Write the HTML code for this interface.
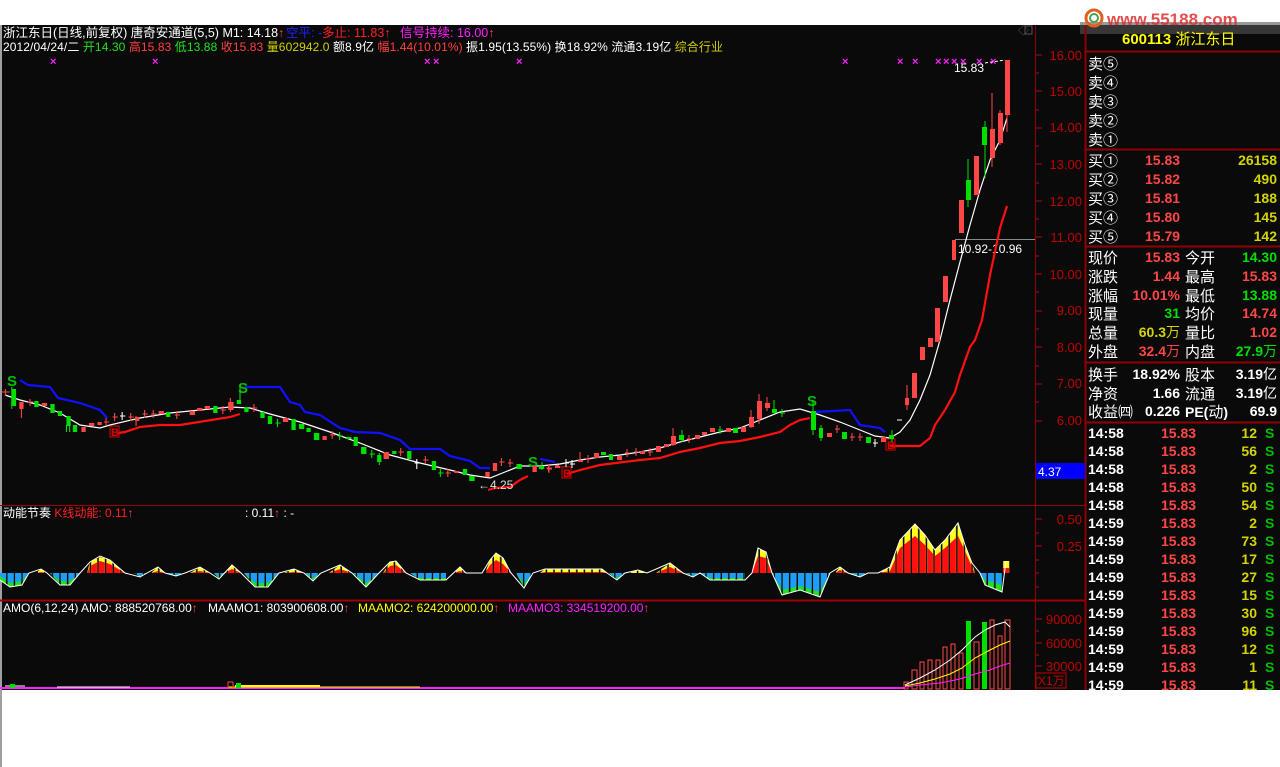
<!DOCTYPE html>
<html><head><meta charset="utf-8"><style>
html,body{margin:0;padding:0;background:#fff;}
svg{display:block;}
text{font-family:"Liberation Sans","Noto Sans CJK SC",sans-serif;}
.r{fill:#ff4646}.g{fill:#00e000}.w{fill:#fff}
.wr{stroke:#ff4646;stroke-width:1}.wg{stroke:#00e000;stroke-width:1}.ww{stroke:#fff;stroke-width:1}
.ax{fill:#c00000;font-size:13px}
.lb{fill:#fff;font-size:15px;font-family:"Noto Sans CJK SC","WenQuanYi Zen Hei",sans-serif}
.n{font-size:14px;font-weight:bold;font-family:"Liberation Sans",sans-serif}
</style></head><body>
<svg width="1280" height="767" viewBox="0 0 1280 767" xmlns="http://www.w3.org/2000/svg">
<defs>
<pattern id="pr" width="7.6" height="10" patternUnits="userSpaceOnUse"><rect width="6" height="10" fill="#ff1010"/></pattern>
<pattern id="py" width="7.6" height="10" patternUnits="userSpaceOnUse"><rect width="6" height="10" fill="#ffff20"/></pattern>
<pattern id="pb" width="7.6" height="10" patternUnits="userSpaceOnUse"><rect width="6" height="10" fill="#1e9cff"/></pattern>
<pattern id="pg" width="7.6" height="10" patternUnits="userSpaceOnUse"><rect width="6" height="10" fill="#20e020"/></pattern>
</defs>
<rect x="0" y="0" width="1280" height="25" fill="#fff"/>
<rect x="0" y="25" width="1280" height="665" fill="#0a0a0a"/>
<rect x="0" y="25" width="2" height="742" fill="#a0a0a0"/>
<!-- logo -->
<rect x="1080" y="22" width="200" height="12" fill="#555" opacity="0.6"/>
<circle cx="1094" cy="18" r="8" fill="none" stroke="#e06020" stroke-width="3"/>
<circle cx="1094" cy="18" r="4" fill="none" stroke="#50a050" stroke-width="2"/>
<text x="1107" y="25" font-size="17" font-weight="bold" fill="#e03030" opacity="0.85">www.55188.com</text>

<!-- borders -->
<line x1="1035.5" y1="25" x2="1035.5" y2="690" stroke="#900000"/>
<line x1="1085.5" y1="25" x2="1085.5" y2="690" stroke="#900000" stroke-width="2"/>
<line x1="0" y1="505.5" x2="1085" y2="505.5" stroke="#a00000"/>
<line x1="0" y1="600.5" x2="1085" y2="600.5" stroke="#a00000" stroke-width="2"/>

<!-- header text -->
<text x="3" y="37" font-size="12.5" fill="#fff">浙江东日(日线,前复权) 唐奇安通道(5,5)  M1: 14.18<tspan fill="#ff4040">↑</tspan></text>
<text x="286" y="37" font-size="12.5" fill="#2020ff">空平: -</text>
<text x="322" y="37" font-size="12.5" fill="#ff2020">多止: 11.83↑</text>
<text x="400" y="37" font-size="12.5" fill="#ff20ff">信号持续: 16.00<tspan fill="#ff4040">↑</tspan></text>
<text x="3" y="51" font-size="12" fill="#fff" textLength="720" lengthAdjust="spacing">2012/04/24/二 <tspan fill="#20e020">开14.30</tspan> <tspan fill="#ff4040">高15.83</tspan> <tspan fill="#20e020">低13.88</tspan> <tspan fill="#ff4040">收15.83</tspan> <tspan fill="#d0d000">量602942.0</tspan> 额8.9亿 <tspan fill="#ff4040">幅1.44(10.01%)</tspan> 振1.95(13.55%) 换18.92% 流通3.19亿 <tspan fill="#d0d000">综合行业</tspan></text>
<g fill="#ff20ff" font-size="11" font-weight="bold"><text x="50" y="65">×</text><text x="152" y="65">×</text><text x="424" y="65">×</text><text x="433" y="65">×</text><text x="516" y="65">×</text><text x="842" y="65">×</text><text x="897" y="65">×</text><text x="912" y="65">×</text><text x="935" y="65">×</text><text x="943" y="65">×</text><text x="951" y="65">×</text><text x="960" y="65">×</text><text x="976" y="65">×</text><text x="990" y="65">×</text></g>
<text x="954" y="72" font-size="12" fill="#fff">15.83</text>
<line x1="985" y1="63" x2="1005" y2="60" stroke="#fff" stroke-dasharray="3,2"/>
<line x1="955" y1="239.5" x2="1035" y2="239.5" stroke="#888"/>
<text x="958" y="253" font-size="12" fill="#fff">10.92-10.96</text>
<text x="1018" y="34" font-size="11" fill="#555">◇</text><rect x="1025" y="26" width="7" height="8" fill="none" stroke="#555"/>

<!-- price axis -->
<g class="ax" text-anchor="end">
<text x="1082" y="60">16.00</text><text x="1082" y="96">15.00</text><text x="1082" y="132">14.00</text><text x="1082" y="169">13.00</text><text x="1082" y="206">12.00</text><text x="1082" y="242">11.00</text><text x="1082" y="279">10.00</text><text x="1082" y="315">9.00</text><text x="1082" y="352">8.00</text><text x="1082" y="388">7.00</text><text x="1082" y="425">6.00</text>
<text x="1082" y="524">0.50</text><text x="1082" y="551">0.25</text>
<text x="1082" y="624">90000</text><text x="1082" y="648">60000</text><text x="1082" y="671">30000</text>
</g>
<g stroke="#c00000">
<path d="M1036 55h6M1036 73h3M1036 91h6M1036 110h3M1036 128h6M1036 146h3M1036 164h6M1036 183h3M1036 201h6M1036 219h3M1036 237h6M1036 256h3M1036 274h6M1036 292h3M1036 311h6M1036 329h3M1036 347h6M1036 366h3M1036 384h6M1036 402h3M1036 421h6M1036 519h6M1036 533h3M1036 546h6M1036 560h3M1036 573h3M1036 587h3M1036 619h6M1036 631h3M1036 643h6M1036 655h3M1036 666h6M1036 678h3"/>
</g>
<rect x="1036" y="673" width="30" height="15" fill="none" stroke="#c00000"/>
<text x="1038" y="685" font-size="12" fill="#c00000">X1万</text>
<rect x="1036" y="463" width="49" height="16" fill="#0000ff"/>
<text x="1038" y="476" font-size="12" fill="#fff">4.37</text>

<!-- main chart lines -->
<polyline fill="none" stroke="#fff" stroke-width="1.2" points="5,395 20,400 40,405 60,413 80,425 100,428 110,425 140,418 170,413 200,410 230,407 250,408 270,414 300,422 330,432 360,443 390,455 420,463 450,470 470,475 490,478 505,472 520,466 540,466 560,464 580,460 600,457 620,455 640,452 660,448 680,442 700,437 720,432 740,428 760,420 780,412 800,409 820,415 840,422 860,430 875,436 890,438 900,432 910,420 920,400 930,375 940,340 950,300 960,262 970,225 980,190 990,160 1000,140 1007,118"/>
<g fill="none" stroke="#1010ff" stroke-width="2.2">
<polyline points="20,380 28,385 50,387 58,398 80,403 100,410 107,418"/>
<polyline points="245,387 280,387 290,402 300,405 305,412 320,415 340,428 355,432 380,433 400,440 410,449 440,449 450,456 470,461 480,468 490,468"/>
<polyline points="540,459 555,462"/>
<polyline points="815,412 850,410 860,425 880,428 885,432"/>
</g>
<g fill="none" stroke="#ff1010" stroke-width="2.2">
<polyline points="118,433 125,432 140,427 160,425 180,425 230,417 240,414"/>
<polyline points="488,490 495,488 510,487 520,480 528,476"/>
<polyline points="567,474 580,470 600,465 640,460 660,458 680,452 700,448 720,443 740,441 760,437 780,432 790,425 800,420 810,418"/>
<polyline points="890,446 920,446 930,438 935,425 945,410 955,392 960,375 970,347 975,340 982,320 990,275 1000,228 1007,206"/>
</g>
<g font-size="15" font-weight="bold" fill="#00c000"><text x="7" y="386">S</text><text x="238" y="393">S</text><text x="528" y="467">S</text><text x="807" y="406">S</text></g>
<g fill="none" stroke="#e00000"><rect x="110" y="426" width="9" height="11"/><rect x="562" y="467" width="9" height="11"/><rect x="886" y="439" width="9" height="11"/></g>
<g font-size="11" font-weight="bold" fill="#e00000"><text x="111" y="436">B</text><text x="563" y="477">B</text><text x="887" y="449">B</text></g>
<text x="478" y="489" font-size="12" fill="#ddd">←4.25</text>

<!-- candles left part (x scaled) -->
<g transform="matrix(1.0714 0 0 1 0 0)">
<path class="wg" d="M11 387v22M65 416v16M62 425v7M224 387v17"/>
<path class="wr" d="M20 402v16M2 392h7M5 389v7M26 402h5M28 399v7M97 422h5M99 418v8M105 417h5M107 413v8M120 417h5M122 413v8M133 414h5M135 410v8M141 414h5M143 410v8M163 415h5M165 411v8M206 410h5M208 406v8M235 408h5M237 404v8M308 435h5M310 431v8M372 452h5M374 448v8M395 460h5M397 456v8M416 473h5M418 469v8M466 462h5M468 458v8M474 463h5M476 459v8M510 468h5M512 464v8M127 416v10M215 398v14"/>
<path class="wg" d="M257 423h5M259 419v8M315 436h5M317 432v8M345 454h5M347 450v8M409 473h5M411 469v8M354 453v12"/>
<path class="ww" d="M112 416h5M114 412v8M387 463h5M389 459v10"/>
<rect class="g" x="11" y="389" width="4" height="17"/><rect class="r" x="18" y="402" width="4" height="7"/>
<rect class="g" x="32" y="401" width="4" height="6"/><rect class="r" x="39" y="403" width="5" height="3"/><rect class="g" x="47" y="404" width="4" height="9"/><rect class="g" x="54" y="411" width="4" height="5"/><rect class="g" x="62" y="416" width="4" height="10"/><rect class="g" x="68" y="425" width="4" height="7"/><rect class="r" x="76" y="427" width="4" height="5"/><rect class="r" x="83" y="423" width="5" height="3"/><rect class="r" x="91" y="422" width="4" height="3"/>
<rect class="r" x="126" y="417" width="4" height="4"/><rect class="r" x="148" y="411" width="5" height="3"/><rect class="g" x="155" y="412" width="4" height="5"/><rect class="r" x="177" y="411" width="5" height="4"/><rect class="r" x="184" y="408" width="5" height="3"/><rect class="r" x="191" y="406" width="5" height="3"/><rect class="g" x="199" y="406" width="4" height="7"/><rect class="r" x="213" y="402" width="5" height="8"/><rect class="g" x="221" y="400" width="4" height="4"/><rect class="g" x="228" y="407" width="4" height="5"/>
<rect class="g" x="243" y="412" width="4" height="6"/><rect class="g" x="250" y="416" width="4" height="8"/><rect class="r" x="264" y="418" width="5" height="4"/><rect class="g" x="272" y="419" width="4" height="11"/><rect class="g" x="279" y="424" width="5" height="5"/><rect class="g" x="286" y="428" width="4" height="4"/><rect class="g" x="293" y="433" width="5" height="7"/><rect class="r" x="301" y="436" width="4" height="4"/><rect class="g" x="323" y="437" width="5" height="2"/><rect class="g" x="330" y="437" width="4" height="9"/><rect class="g" x="337" y="447" width="5" height="7"/><rect class="g" x="352" y="455" width="4" height="7"/><rect class="r" x="358" y="452" width="5" height="7"/><rect class="g" x="366" y="451" width="4" height="3"/><rect class="g" x="380" y="451" width="4" height="8"/><rect class="g" x="403" y="461" width="4" height="9"/><rect class="r" x="424" y="471" width="4" height="2"/><rect class="g" x="432" y="469" width="4" height="6"/><rect class="g" x="438" y="476" width="5" height="5"/><rect class="r" x="453" y="472" width="4" height="5"/><rect class="r" x="460" y="463" width="4" height="8"/><rect class="g" x="482" y="464" width="5" height="5"/><rect class="r" x="497" y="466" width="4" height="6"/><rect class="g" x="503" y="466" width="5" height="3"/><rect class="r" x="518" y="466" width="5" height="2"/>
</g>
<!-- candles middle/right -->
<path class="wr" d="M547 469h5M549 465v8M586 459h5M588 455v8M625 453h5M627 449v8M634 452h5M636 448v8M648 452h5M650 448v8M687 439h5M689 435v8M580 452v10M673 428v18M751 410v18M759 394v30M767 397v14M835 429h5M837 425v8M850 437h5M852 433v8M858 437h5M860 433v8M907 385v25M992 93v74M1000 110v35M1007 115v17"/>
<path class="wg" d="M542 462v8M682 430v12M718 430h5M720 426v8M774 400v14M780 413h5M782 409v8M813 400v35M821 425v16M892 430v12M968 159v48M985 121v57"/>
<path class="ww" d="M564 463h5M566 459v8M570 464h5M572 460v8M873 443h5M875 439v8M897 420h5"/>
<rect class="g" x="540" y="466" width="4" height="3"/><rect class="r" x="555" y="465" width="4" height="2"/><rect class="r" x="578" y="460" width="5" height="2"/><rect class="r" x="594" y="453" width="5" height="5"/><rect class="g" x="601" y="452" width="5" height="3"/><rect class="g" x="609" y="454" width="4" height="6"/><rect class="r" x="617" y="456" width="5" height="4"/><rect class="r" x="640" y="451" width="5" height="3"/><rect class="r" x="656" y="446" width="5" height="6"/><rect class="r" x="664" y="444" width="5" height="3"/><rect class="r" x="671" y="436" width="5" height="9"/><rect class="g" x="679" y="435" width="5" height="5"/><rect class="r" x="695" y="435" width="5" height="4"/><rect class="r" x="702" y="432" width="5" height="3"/><rect class="r" x="710" y="428" width="5" height="4"/><rect class="r" x="726" y="428" width="5" height="4"/><rect class="g" x="733" y="428" width="5" height="5"/><rect class="r" x="741" y="427" width="5" height="5"/><rect class="r" x="749" y="417" width="5" height="10"/><rect class="r" x="757" y="401" width="5" height="18"/><rect class="r" x="765" y="403" width="5" height="5"/><rect class="g" x="772" y="409" width="5" height="4"/>
<rect class="g" x="811" y="411" width="5" height="19"/><rect class="g" x="819" y="428" width="4" height="10"/><rect class="r" x="827" y="433" width="5" height="4"/><rect class="g" x="842" y="432" width="5" height="7"/><rect class="g" x="866" y="437" width="5" height="6"/><rect class="r" x="881" y="437" width="5" height="5"/><rect class="g" x="889" y="435" width="5" height="4"/>
<rect class="r" x="905" y="398" width="4" height="7"/><rect class="r" x="912" y="373" width="5" height="25"/><rect class="r" x="920" y="347" width="5" height="13"/><rect class="r" x="928" y="338" width="5" height="9"/><rect class="r" x="935" y="308" width="5" height="34"/><rect class="r" x="943" y="276" width="5" height="26"/><rect class="r" x="952" y="240" width="4" height="20"/><rect class="r" x="959" y="200" width="5" height="33"/><rect class="g" x="966" y="180" width="5" height="20"/><rect class="r" x="974" y="156" width="5" height="39"/><rect class="g" x="982" y="127" width="5" height="18"/><rect class="r" x="990" y="129" width="5" height="29"/><rect class="r" x="998" y="113" width="5" height="30"/><rect class="r" x="1005" y="60" width="5" height="55"/>

<!-- indicator pane -->
<text x="3" y="517" font-size="12" fill="#fff">动能节奏 <tspan fill="#ff2020">K线动能: 0.11</tspan><tspan fill="#ff4040">↑</tspan></text>
<text x="245" y="517" font-size="12" fill="#fff">: 0.11<tspan fill="#ff4040">↑</tspan>  : -</text>
<g>
<g fill="url(#py)">
<polygon points="36,573 41,569 47,573"/><polygon points="87,573 90,562 100,557 110,560 125,573"/><polygon points="151,573 158,567 165,573"/><polygon points="190,573 200,567 210,573"/><polygon points="224,573 232,565 241,573"/><polygon points="284,573 294,569 304,573"/><polygon points="329,573 340,565 352,573"/><polygon points="383,573 390,562 396,561 406,573"/><polygon points="453,573 460,567 466,573"/><polygon points="485,573 490,560 496,553 503,558 511,573"/><polygon points="540,573 545,569 602,569 607,573"/><polygon points="629,573 638,570 647,573"/><polygon points="656,573 670,563 683,573"/><polygon points="752,573 758,548 766,552 772,573"/><polygon points="835,573 840,567 848,573"/><polygon points="878,573 890,567 900,540 915,524 925,535 935,550 945,540 958,523 965,545 972,563 975,573"/><polygon points="1003,573 1003,561 1010,561 1010,573"/>
</g>
<g fill="url(#pr)">
<polygon points="36,573 41,572 47,573"/><polygon points="87,573 90,566 100,561 110,564 125,573"/><polygon points="151,573 158,571 165,573"/><polygon points="190,573 200,571 210,573"/><polygon points="224,573 232,569 241,573"/><polygon points="284,573 294,572 304,573"/><polygon points="329,573 340,569 352,573"/><polygon points="383,573 390,566 396,565 406,573"/><polygon points="453,573 460,571 466,573"/><polygon points="485,573 490,565 496,560 503,564 511,573"/><polygon points="540,573 545,572 602,572 607,573"/><polygon points="656,573 670,567 683,573"/><polygon points="752,573 758,556 766,558 772,573"/><polygon points="835,573 840,570 848,573"/><polygon points="878,573 890,571 900,548 915,536 925,545 935,556 945,548 958,536 965,551 972,567 975,573"/><polygon points="1003,573 1003,568 1010,568 1010,573"/>
</g>
<g fill="url(#pg)">
<polygon points="0,573 0,580 10,587 22,585 29,573"/><polygon points="50,573 60,585 70,585 80,573"/><polygon points="134,573 140,577 147,573"/><polygon points="167,573 176,576 185,573"/><polygon points="214,573 219,579 224,573"/><polygon points="244,573 255,587 268,587 279,573"/><polygon points="305,573 313,581 321,573"/><polygon points="353,573 366,587 379,573"/><polygon points="410,573 420,580 446,580 446,573"/><polygon points="516,573 524,588 533,573"/><polygon points="609,573 617,580 625,573"/><polygon points="686,573 693,577 700,573"/><polygon points="700,573 710,580 745,580 745,573"/><polygon points="772,573 782,595 800,590 820,597 830,573"/><polygon points="850,573 860,577 868,573"/><polygon points="980,573 985,585 1002,592 1002,573"/>
</g>
<g fill="url(#pb)">
<polygon points="0,573 0,576 10,583 22,581 29,573"/><polygon points="50,573 60,581 70,581 80,573"/><polygon points="134,573 140,576 147,573"/><polygon points="167,573 176,575 185,573"/><polygon points="214,573 219,577 224,573"/><polygon points="244,573 255,583 268,583 279,573"/><polygon points="305,573 313,578 321,573"/><polygon points="353,573 366,583 379,573"/><polygon points="410,573 420,578 446,578 446,573"/><polygon points="516,573 524,584 533,573"/><polygon points="609,573 617,578 625,573"/><polygon points="686,573 693,576 700,573"/><polygon points="700,573 710,578 745,578 745,573"/><polygon points="772,573 782,590 800,586 820,592 830,573"/><polygon points="850,573 860,576 868,573"/><polygon points="980,573 985,580 1002,585 1002,573"/>
</g>
<polyline fill="none" stroke="#fff" stroke-width="1" points="0,580 10,587 22,585 29,573 41,569 47,573 60,585 70,585 80,573 90,562 100,556 110,560 125,573 140,577 147,573 158,567 165,573 176,576 185,573 200,567 210,573 219,579 232,565 241,573 255,587 268,587 279,573 294,569 304,573 313,581 321,573 340,565 352,573 366,587 379,573 390,562 396,561 406,573 420,580 446,580 460,567 466,573 482,573 490,560 496,553 503,558 511,573 524,588 533,573 545,569 602,569 607,573 617,580 625,573 638,570 647,573 670,563 683,573 693,577 700,573 710,580 745,580 752,573 758,548 766,552 772,573 782,595 800,590 820,597 830,573 840,567 848,573 860,577 868,573 878,573 890,567 900,540 915,524 925,535 935,550 945,540 958,523 965,545 972,563 980,573 985,585 1002,592 1006,561"/>
</g>

<!-- volume pane -->
<text x="3" y="612" font-size="12" fill="#fff">AMO(6,12,24) AMO: 888520768.00<tspan fill="#ff4040">↑</tspan></text>
<text x="208" y="612" font-size="12" fill="#fff">MAAMO1: 803900608.00<tspan fill="#ff4040">↑</tspan></text>
<text x="358" y="612" font-size="12" fill="#ffff00">MAAMO2: 624200000.00<tspan fill="#ff4040">↑</tspan></text>
<text x="508" y="612" font-size="12" fill="#ff20ff">MAAMO3: 334519200.00<tspan fill="#ff4040">↑</tspan></text>
<line x1="0" y1="688" x2="905" y2="688" stroke="#ff20ff" stroke-width="2"/>
<line x1="5" y1="686" x2="25" y2="686" stroke="#fff"/><line x1="57" y1="687" x2="130" y2="687" stroke="#fff"/>
<line x1="235" y1="686" x2="320" y2="686" stroke="#ffff00" stroke-width="2"/><line x1="228" y1="687" x2="420" y2="687" stroke="#ffff00"/>
<rect x="10" y="684" width="5" height="4" fill="#00e000"/><rect x="236" y="683" width="5" height="5" fill="#00e000"/><rect x="228" y="682" width="5" height="6" fill="none" stroke="#ff4040"/>
<g fill="none" stroke="#ff4646">
<rect x="904" y="682" width="4" height="7"/><rect x="912" y="670" width="5" height="19"/><rect x="920" y="662" width="4" height="27"/><rect x="928" y="660" width="4" height="29"/><rect x="936" y="660" width="4" height="29"/><rect x="943" y="647" width="4" height="42"/><rect x="951" y="644" width="4" height="45"/><rect x="959" y="653" width="4" height="36"/><rect x="974" y="642" width="5" height="47"/><rect x="990" y="620" width="4" height="69"/><rect x="998" y="636" width="4" height="53"/><rect x="1005" y="620" width="5" height="69"/>
</g>
<rect x="966" y="621" width="5" height="68" fill="#00e000"/><rect x="982" y="622" width="5" height="67" fill="#00e000"/>
<polyline fill="none" stroke="#fff" points="905,685 920,678 935,670 950,660 962,650 975,637 985,630 995,625 1005,622 1010,627"/>
<polyline fill="none" stroke="#ffff00" points="905,686 920,683 935,679 950,674 962,668 975,658 990,650 1000,645 1010,641"/>
<polyline fill="none" stroke="#ff20ff" points="905,687 920,685 940,683 960,679 975,674 990,670 1000,666 1010,663"/>

<!-- right panel -->
<line x1="1086" y1="51.5" x2="1280" y2="51.5" stroke="#900000" stroke-width="2"/>
<line x1="1086" y1="149.5" x2="1280" y2="149.5" stroke="#900000" stroke-width="2"/>
<line x1="1086" y1="246.5" x2="1280" y2="246.5" stroke="#900000" stroke-width="2"/>
<line x1="1086" y1="362.5" x2="1280" y2="362.5" stroke="#900000" stroke-width="2"/>
<line x1="1086" y1="422.5" x2="1280" y2="422.5" stroke="#900000" stroke-width="2"/>
<text x="1122" y="44" font-size="15" font-weight="bold" fill="#ffff00">600113 <tspan font-weight="normal" font-family="Noto Sans CJK SC,sans-serif">浙江东日</tspan></text>
<g class="lb">
<text x="1088" y="69">卖⑤</text><text x="1088" y="88">卖④</text><text x="1088" y="107">卖③</text><text x="1088" y="126">卖②</text><text x="1088" y="145">卖①</text>
<text x="1088" y="166">买①</text><text x="1088" y="185">买②</text><text x="1088" y="204">买③</text><text x="1088" y="223">买④</text><text x="1088" y="242">买⑤</text>
<text x="1088" y="263">现价</text><text x="1088" y="282">涨跌</text><text x="1088" y="301">涨幅</text><text x="1088" y="319">现量</text><text x="1088" y="338">总量</text><text x="1088" y="357">外盘</text>
<text x="1185" y="263">今开</text><text x="1185" y="282">最高</text><text x="1185" y="301">最低</text><text x="1185" y="319">均价</text><text x="1185" y="338">量比</text><text x="1185" y="357">内盘</text>
<text x="1088" y="380">换手</text><text x="1088" y="399">净资</text><text x="1088" y="417">收益㈣</text>
<text x="1185" y="380">股本</text><text x="1185" y="399">流通</text><text x="1185" y="417"><tspan font-family="Liberation Sans" font-size="14" font-weight="bold">PE(</tspan>动<tspan font-family="Liberation Sans" font-size="14" font-weight="bold">)</tspan></text>
</g>
<g class="n" fill="#ff4646">
<text x="1145" y="165">15.83</text><text x="1145" y="184">15.82</text><text x="1145" y="203">15.81</text><text x="1145" y="222">15.80</text><text x="1145" y="241">15.79</text>
</g>
<g class="n" fill="#d4d400" text-anchor="end">
<text x="1277" y="165">26158</text><text x="1277" y="184">490</text><text x="1277" y="203">188</text><text x="1277" y="222">145</text><text x="1277" y="241">142</text>
</g>
<g class="n" text-anchor="end">
<text x="1180" y="262" fill="#ff4646">15.83</text><text x="1180" y="281" fill="#ff4646">1.44</text><text x="1180" y="300" fill="#ff4646">10.01%</text><text x="1180" y="318" fill="#00e000">31</text><text x="1180" y="337" fill="#d4d400">60.3<tspan font-weight="normal" font-family="Noto Sans CJK SC,sans-serif">万</tspan></text><text x="1180" y="356" fill="#ff4646">32.4<tspan font-weight="normal" font-family="Noto Sans CJK SC,sans-serif">万</tspan></text>
<text x="1277" y="262" fill="#00e000">14.30</text><text x="1277" y="281" fill="#ff4646">15.83</text><text x="1277" y="300" fill="#00e000">13.88</text><text x="1277" y="318" fill="#ff4646">14.74</text><text x="1277" y="337" fill="#ff4646">1.02</text><text x="1277" y="356" fill="#00e000">27.9<tspan font-weight="normal" font-family="Noto Sans CJK SC,sans-serif">万</tspan></text>
<text x="1180" y="379" fill="#fff">18.92%</text><text x="1180" y="398" fill="#fff">1.66</text><text x="1180" y="416" fill="#fff">0.226</text>
<text x="1277" y="379" fill="#fff">3.19<tspan font-weight="normal" font-family="Noto Sans CJK SC,sans-serif">亿</tspan></text><text x="1277" y="398" fill="#fff">3.19<tspan font-weight="normal" font-family="Noto Sans CJK SC,sans-serif">亿</tspan></text><text x="1277" y="416" fill="#fff">69.9</text>
</g>
<g class="n">
<g fill="#fff"><text x="1088" y="438">14:58</text><text x="1088" y="456">14:58</text><text x="1088" y="474">14:58</text><text x="1088" y="492">14:58</text><text x="1088" y="510">14:58</text><text x="1088" y="528">14:59</text><text x="1088" y="546">14:59</text><text x="1088" y="564">14:59</text><text x="1088" y="582">14:59</text><text x="1088" y="600">14:59</text><text x="1088" y="618">14:59</text><text x="1088" y="636">14:59</text><text x="1088" y="654">14:59</text><text x="1088" y="672">14:59</text><text x="1088" y="690">14:59</text></g>
<g fill="#ff4646"><text x="1161" y="438">15.83</text><text x="1161" y="456">15.83</text><text x="1161" y="474">15.83</text><text x="1161" y="492">15.83</text><text x="1161" y="510">15.83</text><text x="1161" y="528">15.83</text><text x="1161" y="546">15.83</text><text x="1161" y="564">15.83</text><text x="1161" y="582">15.83</text><text x="1161" y="600">15.83</text><text x="1161" y="618">15.83</text><text x="1161" y="636">15.83</text><text x="1161" y="654">15.83</text><text x="1161" y="672">15.83</text><text x="1161" y="690">15.83</text></g>
<g fill="#d4d400" text-anchor="end"><text x="1257" y="438">12</text><text x="1257" y="456">56</text><text x="1257" y="474">2</text><text x="1257" y="492">50</text><text x="1257" y="510">54</text><text x="1257" y="528">2</text><text x="1257" y="546">73</text><text x="1257" y="564">17</text><text x="1257" y="582">27</text><text x="1257" y="600">15</text><text x="1257" y="618">30</text><text x="1257" y="636">96</text><text x="1257" y="654">12</text><text x="1257" y="672">1</text><text x="1257" y="690">11</text></g>
<g fill="#00c000"><text x="1265" y="438">S</text><text x="1265" y="456">S</text><text x="1265" y="474">S</text><text x="1265" y="492">S</text><text x="1265" y="510">S</text><text x="1265" y="528">S</text><text x="1265" y="546">S</text><text x="1265" y="564">S</text><text x="1265" y="582">S</text><text x="1265" y="600">S</text><text x="1265" y="618">S</text><text x="1265" y="636">S</text><text x="1265" y="654">S</text><text x="1265" y="672">S</text><text x="1265" y="690">S</text></g>
</g>
<rect x="0" y="690" width="1280" height="77" fill="#fff"/>
<rect x="0" y="690" width="2" height="77" fill="#a0a0a0"/>
</svg>
</body></html>
